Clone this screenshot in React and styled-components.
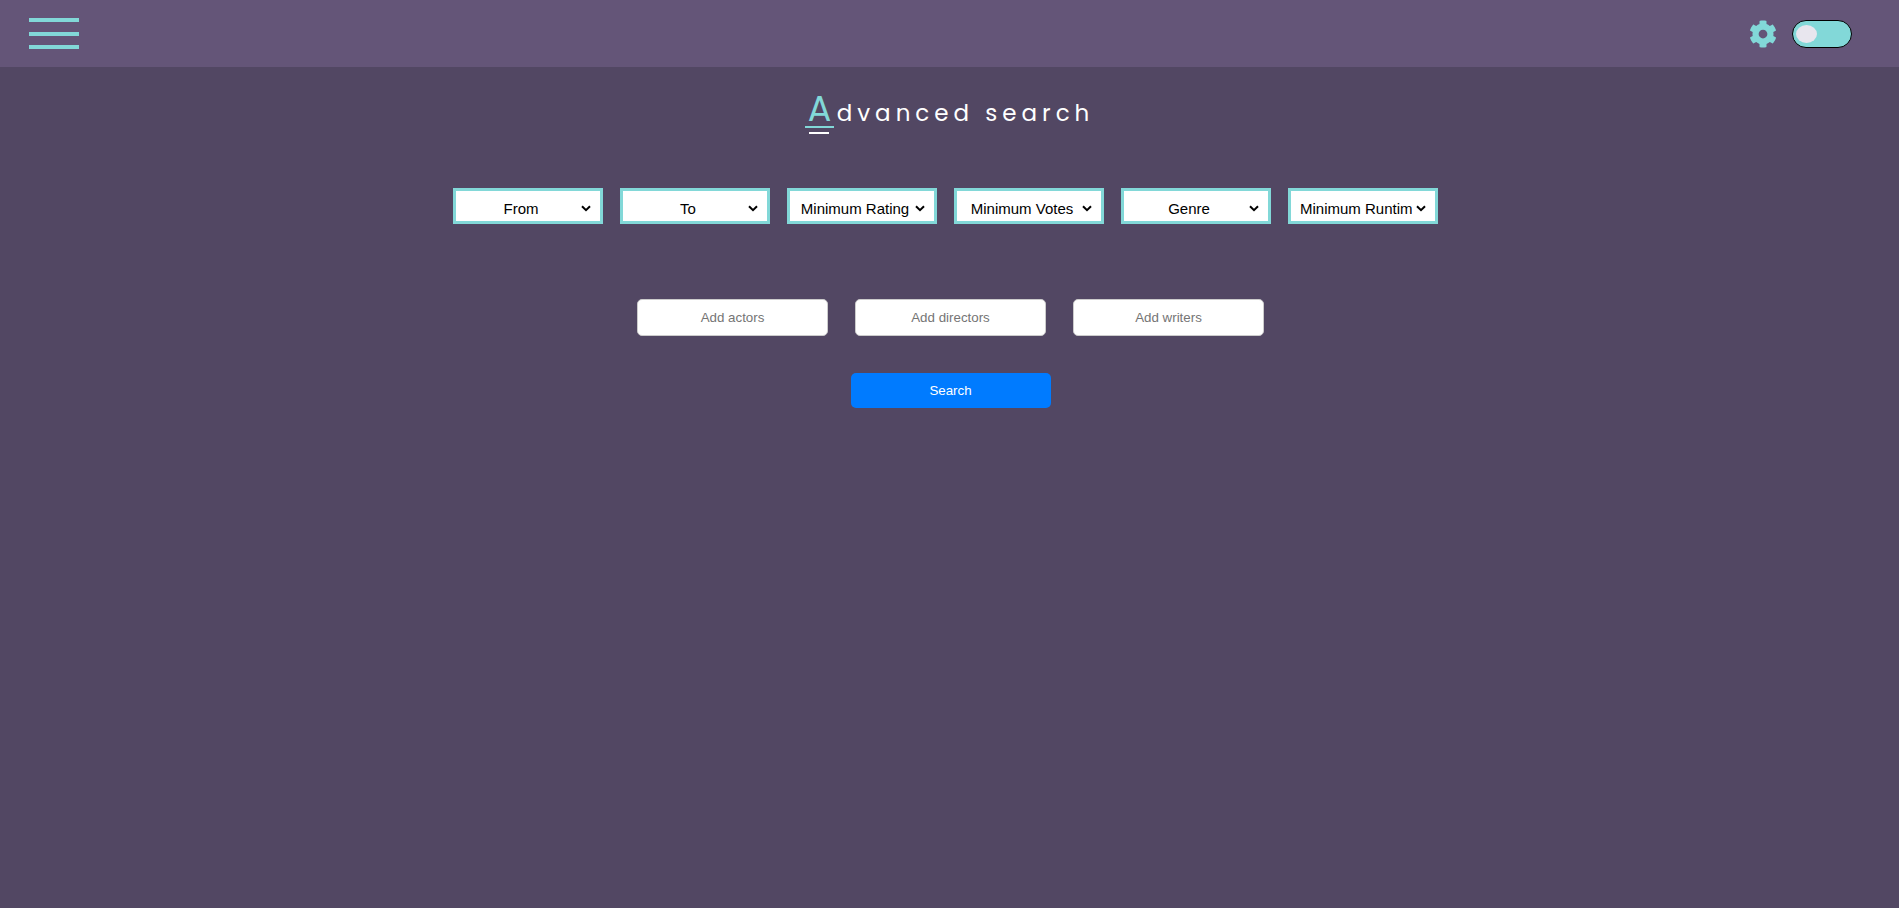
import React, { useState } from 'react';
import styled, { createGlobalStyle } from 'styled-components';
import { FaCog } from 'react-icons/fa';

const GlobalStyle = createGlobalStyle`
  *, *::before, *::after { box-sizing: border-box; }
  body {
    margin: 0;
    background: #524763;
    font-family: "Liberation Sans", Arial, sans-serif;
  }
`;

const Header = styled.header`
  display: flex;
  align-items: center;
  justify-content: space-between;
  height: 67px;
  padding: 0 47px 0 29px;
  background: #645578;
`;

const MenuButton = styled.button`
  display: flex;
  flex-direction: column;
  justify-content: space-between;
  width: 50px;
  height: 31px;
  padding: 0;
  border: 0;
  background: none;
  cursor: pointer;
`;

const MenuBar = styled.span`
  width: 100%;
  height: 4px;
  background: #82d8d8;
`;

const HeaderTools = styled.div`
  display: flex;
  align-items: center;
  gap: 15px;
`;

const SettingsButton = styled.button`
  display: flex;
  padding: 0;
  border: 0;
  background: none;
  color: #82d8d8;
  cursor: pointer;
`;

const Toggle = styled.input`
  appearance: none;
  display: flex;
  align-items: center;
  width: 60px;
  height: 28px;
  margin: 0;
  padding: 0 3px;
  border: 1px solid #000;
  border-radius: 14px;
  background: #82d8d8;
  cursor: pointer;

  &::before {
    content: "";
    width: 21px;
    height: 18px;
    border-radius: 50%;
    background: #e8e6ee;
  }

  &:checked { justify-content: flex-end; }
`;

const Main = styled.main`
  display: flex;
  flex-direction: column;
  align-items: center;
  padding: 24px 16px;
`;

const Title = styled.h1`
  display: flex;
  align-items: baseline;
  height: 43px;
  margin: 0 0 54px;
  color: #fff;
  font-family: Poppins, Lato, sans-serif;
  font-size: 23px;
  font-weight: 400;
  line-height: 35px;
  letter-spacing: 5px;
`;

const Initial = styled.span`
  display: inline-block;
  width: 29px;
  margin-right: 3px;
  padding-left: 3px;
  border-bottom: 2px solid #82d8d8;
  color: #82d8d8;
  font-size: 35px;
  letter-spacing: 0;

  &::after {
    content: "";
    position: absolute;
    display: block;
    width: 20px;
    height: 2px;
    margin: 6px 0 0 1px;
    background: #fff;
  }
`;

const Form = styled.form`
  display: flex;
  flex-direction: column;
  align-items: center;
`;

const Filters = styled.div`
  display: flex;
  flex-wrap: wrap;
  justify-content: center;
  gap: 17px;
  margin-bottom: 75px;
  padding-right: 8px;
`;

const chevron = `url("data:image/svg+xml,%3Csvg xmlns='http://www.w3.org/2000/svg' width='10' height='7' viewBox='0 0 10 7'%3E%3Cpath d='M1 1.2L5 5.2L9 1.2' fill='none' stroke='black' stroke-width='2'/%3E%3C/svg%3E")`;

const Select = styled.select`
  appearance: none;
  width: 150px;
  height: 36px;
  padding: 5px 23px 0 9px;
  border: 3px solid #82d8d8;
  border-radius: 0;
  background: #fff ${chevron} no-repeat right 9px top 14px;
  color: #000;
  font-family: inherit;
  font-size: 15px;
  text-align: center;
`;

const People = styled.div`
  display: flex;
  flex-wrap: wrap;
  justify-content: center;
  gap: 27px;
  margin-bottom: 37px;
  padding-left: 2px;
`;

const PersonInput = styled.input`
  width: 191px;
  height: 37px;
  padding: 0 10px;
  border: 1px solid #ccc;
  border-radius: 5px;
  background: #fff;
  font-family: inherit;
  text-align: center;

  &::placeholder { color: #757575; }
`;

const SearchButton = styled.button`
  width: 200px;
  height: 35px;
  margin-left: 2px;
  border: 0;
  border-radius: 5px;
  background: #007bff;
  color: #fff;
  font-family: inherit;
  cursor: pointer;
`;

const filters = ['From', 'To', 'Minimum Rating', 'Minimum Votes', 'Genre', 'Minimum Runtime'];
const people = ['actors', 'directors', 'writers'];

export default function App() {
  const [alternateTheme, setAlternateTheme] = useState(false);

  return (
    <>
      <GlobalStyle />
      <Header>
        <MenuButton type="button" aria-label="Menu">
          <MenuBar />
          <MenuBar />
          <MenuBar />
        </MenuButton>
        <HeaderTools>
          <SettingsButton type="button" aria-label="Settings">
            <FaCog size={28} aria-hidden="true" />
          </SettingsButton>
          <Toggle
            type="checkbox"
            role="switch"
            aria-label="Theme"
            checked={alternateTheme}
            onChange={(event) => setAlternateTheme(event.target.checked)}
          />
        </HeaderTools>
      </Header>
      <Main>
        <Title><Initial>A</Initial>dvanced search</Title>
        <Form onSubmit={(event) => event.preventDefault()}>
          <Filters>
            {filters.map((label) => (
              <Select key={label} aria-label={label}>
                <option>{label}</option>
              </Select>
            ))}
          </Filters>
          <People>
            {people.map((role) => (
              <PersonInput key={role} type="text" aria-label={`Add ${role}`} placeholder={`Add ${role}`} />
            ))}
          </People>
          <SearchButton type="submit">Search</SearchButton>
        </Form>
      </Main>
    </>
  );
}
